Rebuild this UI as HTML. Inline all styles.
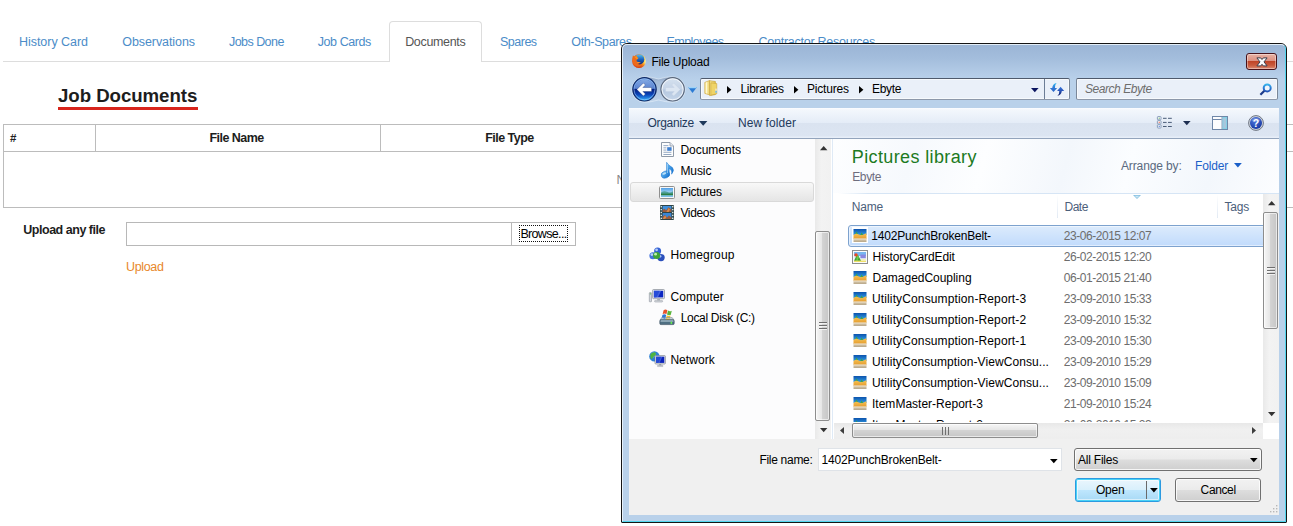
<!DOCTYPE html>
<html><head><meta charset="utf-8"><title>File Upload</title>
<style>
*{box-sizing:border-box;margin:0;padding:0}
html,body{width:1293px;height:526px;overflow:hidden;background:#fff}
body{font-family:"Liberation Sans",sans-serif;font-size:12px;color:#000;position:relative}
.a{position:absolute;white-space:nowrap}
svg{display:block;overflow:visible}
.b{font-weight:bold}
.i{font-style:italic}
</style></head><body>
<svg width="0" height="0" style="position:absolute">
<defs>
<linearGradient id="gBack" x1="0" y1="0" x2="0" y2="1"><stop offset="0" stop-color="#6d9ce0"></stop><stop offset=".46" stop-color="#2f62c4"></stop><stop offset=".5" stop-color="#051f80"></stop><stop offset=".72" stop-color="#0a44b8"></stop><stop offset="1" stop-color="#34b4ff"></stop></linearGradient>
<linearGradient id="gPill" x1="0" y1="0" x2="0" y2="1"><stop offset="0" stop-color="#7f93b2" stop-opacity=".75"></stop><stop offset=".18" stop-color="#97acc9" stop-opacity=".6"></stop><stop offset=".6" stop-color="#a9bfdb" stop-opacity=".55"></stop><stop offset="1" stop-color="#c3d5ea" stop-opacity=".7"></stop></linearGradient>
<linearGradient id="gFolderL" x1="0" y1="0" x2="1" y2="0"><stop offset="0" stop-color="#f3dc78"></stop><stop offset=".35" stop-color="#fbf0b4"></stop><stop offset="1" stop-color="#ecd060"></stop></linearGradient>
<linearGradient id="gFwd" x1="0" y1="0" x2="0" y2="1"><stop offset="0" stop-color="#d6e2f0"></stop><stop offset=".5" stop-color="#c4d3e6"></stop><stop offset=".52" stop-color="#b4c7df"></stop><stop offset="1" stop-color="#c6d6ea"></stop></linearGradient>
<linearGradient id="gThumbV" x1="0" y1="0" x2="1" y2="0"><stop offset="0" stop-color="#f4f4f4"></stop><stop offset=".45" stop-color="#e4e4e4"></stop><stop offset=".5" stop-color="#d2d2d2"></stop><stop offset="1" stop-color="#c4c4c4"></stop></linearGradient>
<linearGradient id="gThumbH" x1="0" y1="0" x2="0" y2="1"><stop offset="0" stop-color="#f4f4f4"></stop><stop offset=".45" stop-color="#e4e4e4"></stop><stop offset=".5" stop-color="#d2d2d2"></stop><stop offset="1" stop-color="#c4c4c4"></stop></linearGradient>
<linearGradient id="gSky" x1="0" y1="0" x2="0" y2="1"><stop offset="0" stop-color="#0c52ac"></stop><stop offset="1" stop-color="#2f9ce6"></stop></linearGradient>
<linearGradient id="gSand" x1="0" y1="0" x2="0" y2="1"><stop offset="0" stop-color="#f5c052"></stop><stop offset="1" stop-color="#e59c2e"></stop></linearGradient>
<linearGradient id="gBeige" x1="0" y1="0" x2="0" y2="1"><stop offset="0" stop-color="#e0d2b6"></stop><stop offset="1" stop-color="#b7a688"></stop></linearGradient>
<linearGradient id="gFolder" x1="0" y1="0" x2="1" y2="0"><stop offset="0" stop-color="#f8ea9c"></stop><stop offset="1" stop-color="#e6c44e"></stop></linearGradient>
<linearGradient id="gRf1" x1="0" y1="0" x2="0" y2="1"><stop offset="0" stop-color="#2cbcf0"></stop><stop offset=".5" stop-color="#2f7ad8"></stop><stop offset="1" stop-color="#2c62c4"></stop></linearGradient>
<linearGradient id="gRf2" x1="0" y1="0" x2="0" y2="1"><stop offset="0" stop-color="#3a78dc"></stop><stop offset=".5" stop-color="#274fb4"></stop><stop offset="1" stop-color="#08145c"></stop></linearGradient>
<linearGradient id="gMag" x1="0" y1="0" x2="0" y2="1"><stop offset="0" stop-color="#35b2ec"></stop><stop offset=".5" stop-color="#2a7ad4"></stop><stop offset="1" stop-color="#2456b8"></stop></linearGradient>
<radialGradient id="gHelp" cx=".4" cy=".3" r=".8"><stop offset="0" stop-color="#4f78e0"></stop><stop offset="1" stop-color="#10309a"></stop></radialGradient>
<linearGradient id="gFoxH" x1="0" y1="0" x2="1" y2="0"><stop offset="0" stop-color="#e5551a"></stop><stop offset=".62" stop-color="#f0781a"></stop><stop offset=".82" stop-color="#ffc52c"></stop><stop offset="1" stop-color="#fff0a0"></stop></linearGradient>
<linearGradient id="gFoxV" x1="0" y1="0" x2="0" y2="1"><stop offset="0" stop-color="#e0481a" stop-opacity="0"></stop><stop offset=".6" stop-color="#e0481a" stop-opacity="0"></stop><stop offset="1" stop-color="#cf3a16" stop-opacity=".95"></stop></linearGradient>
<linearGradient id="gGlobe" x1="0" y1="0" x2="0" y2="1"><stop offset="0" stop-color="#56c2f2"></stop><stop offset=".5" stop-color="#1c62bc"></stop><stop offset="1" stop-color="#0c2a78"></stop></linearGradient>
<radialGradient id="gFox" cx=".5" cy=".4" r=".7"><stop offset="0" stop-color="#ffb52e"></stop><stop offset=".6" stop-color="#ee6a12"></stop><stop offset="1" stop-color="#c8400c"></stop></radialGradient>
<linearGradient id="gNote" x1="0" y1="0" x2="1" y2="1"><stop offset="0" stop-color="#66bcf6"></stop><stop offset="1" stop-color="#0f6ccc"></stop></linearGradient>
<linearGradient id="gPicSky" x1="0" y1="0" x2="0" y2="1"><stop offset="0" stop-color="#4f9fe6"></stop><stop offset=".6" stop-color="#b4dcf6"></stop><stop offset="1" stop-color="#b4dcf6"></stop></linearGradient>
</defs>
</svg>

<div class="a" style="left:3px;top:61px;width:1290px;height:1px;background:#ddd"></div>
<div class="a" style="left:389px;top:21px;width:93px;height:41px;border:1px solid #ddd;border-bottom:0;border-radius:4px 4px 0 0;background:#fff"></div>
<div class="a" style="left: 19px; top: 35px; font-size: 12.5px; line-height: 14px; color: rgb(75, 140, 200); letter-spacing: -0.04px;">History Card</div>
<div class="a" style="left: 122.3px; top: 35px; font-size: 12.5px; line-height: 14px; color: rgb(75, 140, 200); letter-spacing: -0.08px;">Observations</div>
<div class="a" style="left: 229px; top: 35px; font-size: 12.5px; line-height: 14px; color: rgb(75, 140, 200); letter-spacing: -0.55px;">Jobs Done</div>
<div class="a" style="left: 317.8px; top: 35px; font-size: 12.5px; line-height: 14px; color: rgb(75, 140, 200); letter-spacing: -0.44px;">Job Cards</div>
<div class="a" style="left: 405.2px; top: 35px; font-size: 12.5px; line-height: 14px; color: rgb(85, 85, 85); letter-spacing: -0.34px;">Documents</div>
<div class="a" style="left: 500px; top: 35px; font-size: 12.5px; line-height: 14px; color: rgb(75, 140, 200); letter-spacing: -0.5px;">Spares</div>
<div class="a" style="left: 571.3px; top: 35px; font-size: 12.5px; line-height: 14px; color: rgb(75, 140, 200); letter-spacing: -0.37px;">Oth-Spares</div>
<div class="a" style="left: 666.5px; top: 35px; font-size: 12.5px; line-height: 14px; color: rgb(75, 140, 200); letter-spacing: -0.53px;">Employees</div>
<div class="a" style="left: 758.5px; top: 35px; font-size: 12.5px; line-height: 14px; color: rgb(75, 140, 200); letter-spacing: -0.25px;">Contractor Resources</div>
<div class="a b" style="left: 58px; top: 85px; font-size: 18.7px; line-height: 21px; color: rgb(29, 29, 29); letter-spacing: -0.07px;">Job Documents</div>
<div class="a" style="left:58px;top:107px;width:140px;height:3px;background:#d8251c"></div>
<div class="a" style="left:3px;top:124px;width:1300px;height:84px;border:1px solid #bcbcbc"></div>
<div class="a" style="left:4px;top:151px;width:1300px;height:1px;background:#bcbcbc"></div>
<div class="a" style="left:95px;top:125px;width:1px;height:26px;background:#bcbcbc"></div>
<div class="a" style="left:380px;top:125px;width:1px;height:26px;background:#bcbcbc"></div>
<div class="a b" style="left:10px;top:132px;font-size:11.5px;line-height:12px;color:#222;">#</div>
<div class="a b" style="left: 209.4px; top: 131px; font-size: 12.5px; line-height: 14px; color: rgb(29, 29, 29); letter-spacing: -0.52px;">File Name</div>
<div class="a b" style="left: 485.2px; top: 131px; font-size: 12.5px; line-height: 14px; color: rgb(29, 29, 29); letter-spacing: -0.53px;">File Type</div>
<div class="a" style="left:616.5px;top:173px;font-size:12.5px;line-height:14px;color:#8a8a8a;">No</div>
<div class="a b" style="left: 23.3px; top: 223px; font-size: 12.5px; line-height: 14px; color: rgb(29, 29, 29); letter-spacing: -0.48px;">Upload any file</div>
<div class="a" style="left:126px;top:222px;width:450px;height:24px;border:1px solid #b8b8b8;background:#fff"></div>
<div class="a" style="left:511px;top:223px;width:1px;height:22px;background:#b8b8b8"></div>
<div class="a" style="left:519px;top:225px;width:49px;height:17px;border:1px dotted #111"></div>
<div class="a" style="left: 520.4px; top: 227px; font-size: 12.5px; line-height: 14px; color: rgb(0, 0, 0); letter-spacing: -0.66px;">Browse...</div>
<div class="a" style="left: 126px; top: 260px; font-size: 12.5px; line-height: 14px; color: rgb(232, 135, 42); letter-spacing: -0.35px;">Upload</div>
<div class="a" style="left:621px;top:43px;width:666px;height:480px;border:1px solid #151515;border-radius:6px 6px 1px 1px;background:linear-gradient(#9bb5d5 0px,#a3bddc 14px,#b4cce7 30px,#b9d1ea 36px,#b9d1ea 100%)"></div>
<div class="a" style="left:622px;top:44px;width:664px;height:478px;border:1px solid rgba(240,248,254,.85);border-right-color:#52d6ee;border-bottom-color:#52d6ee;border-radius:5px 5px 0 0"></div>
<div class="a" style="left: 651.4px; top: 55px; font-size: 12px; line-height: 14px; color: rgb(0, 0, 0); letter-spacing: -0.25px;">File Upload</div>
<div class="a" style="left:1246px;top:53px;width:31px;height:17px;border:1px solid #47121a;border-radius:3px;background:linear-gradient(#e8b2a5 0,#dc9080 47%,#bf4528 50%,#c95a3c 75%,#da8a72 100%);box-shadow:inset 0 0 0 1px rgba(255,255,255,.4)"></div>
<div class="a" style="left:700px;top:78px;width:370px;height:22px;border:1px solid #7a8799;border-top-color:#4f5a6c;border-bottom-color:#8d98aa;border-radius:2px;background:#eaf0f9;box-shadow:inset 0 0 0 1px #f7fafd"></div>
<div class="a" style="left:1044px;top:79px;width:1px;height:20px;background:#6c7d96"></div>
<div class="a" style="left:1076px;top:78px;width:202px;height:22px;border:1px solid #7a8799;border-top-color:#4f5a6c;border-bottom-color:#8d98aa;border-radius:2px;background:#eaf0f9;box-shadow:inset 0 0 0 1px #f7fafd"></div>
<div class="a" style="left: 740.5px; top: 82px; font-size: 12px; line-height: 14px; color: rgb(0, 0, 0); letter-spacing: -0.3px;">Libraries</div>
<div class="a" style="left: 807px; top: 82px; font-size: 12px; line-height: 14px; color: rgb(0, 0, 0); letter-spacing: -0.19px;">Pictures</div>
<div class="a" style="left: 872px; top: 82px; font-size: 12px; line-height: 14px; color: rgb(0, 0, 0); letter-spacing: -0.34px;">Ebyte</div>
<div class="a i" style="left: 1085px; top: 82px; font-size: 12px; line-height: 14px; color: rgb(109, 109, 109); letter-spacing: -0.45px;">Search Ebyte</div>
<div class="a" style="left:629px;top:108px;width:650px;height:31px;background:linear-gradient(#fcfdff 0,#f3f7fc 2px,#e4ecf7 15px,#dae3f0 15.5px,#dce5f2 28px,#e7eef8 29px,#e7eef8 30px);border-bottom:1px solid #93a4bc"></div>
<div class="a" style="left: 647.4px; top: 116px; font-size: 12px; line-height: 14px; color: rgb(30, 57, 91); letter-spacing: -0.26px;">Organize</div>
<div class="a" style="left: 738px; top: 116px; font-size: 12px; line-height: 14px; color: rgb(30, 57, 91); letter-spacing: 0.06px;">New folder</div>
<div class="a" style="left:629px;top:139px;width:204px;height:300px;background:#fcfcfd"></div>
<div class="a" style="left:833px;top:139px;width:446px;height:300px;background:#fff"></div>
<div class="a" style="left:833px;top:139px;width:446px;height:54px;background:linear-gradient(105deg,#fdfeff 0,#f6f9fd 18%,#fdfeff 34%,#f3f7fc 52%,#fbfdff 66%,#f3f7fc 84%,#fcfdff 100%)"></div>
<div class="a" style="left:629px;top:439px;width:650px;height:76px;background:#f0f0f0"></div>
<div class="a" style="left:630px;top:182px;width:184px;height:20px;border:1px solid #d9d9d9;border-radius:3px;background:linear-gradient(#f8f8f8,#e5e5e5)"></div>
<div class="a" style="left: 680.4px; top: 143px; font-size: 12px; line-height: 14px; color: rgb(0, 0, 0); letter-spacing: -0.01px;">Documents</div>
<div class="a" style="left: 680.4px; top: 164px; font-size: 12px; line-height: 14px; color: rgb(0, 0, 0); letter-spacing: -0.07px;">Music</div>
<div class="a" style="left: 680.4px; top: 185px; font-size: 12px; line-height: 14px; color: rgb(0, 0, 0); letter-spacing: -0.26px;">Pictures</div>
<div class="a" style="left: 680.4px; top: 206px; font-size: 12px; line-height: 14px; color: rgb(0, 0, 0); letter-spacing: -0.33px;">Videos</div>
<div class="a" style="left: 670.4px; top: 248px; font-size: 12px; line-height: 14px; color: rgb(0, 0, 0); letter-spacing: 0.17px;">Homegroup</div>
<div class="a" style="left: 670.4px; top: 290px; font-size: 12px; line-height: 14px; color: rgb(0, 0, 0); letter-spacing: 0.11px;">Computer</div>
<div class="a" style="left: 680.7px; top: 311px; font-size: 12px; line-height: 14px; color: rgb(0, 0, 0); letter-spacing: -0.31px;">Local Disk (C:)</div>
<div class="a" style="left: 670.4px; top: 353px; font-size: 12px; line-height: 14px; color: rgb(0, 0, 0); letter-spacing: 0.05px;">Network</div>
<div class="a" style="left: 851.8px; top: 147px; font-size: 18px; line-height: 20px; color: rgb(28, 122, 34); letter-spacing: 0.37px;">Pictures library</div>
<div class="a" style="left: 852.2px; top: 170px; font-size: 12px; line-height: 14px; color: rgb(110, 110, 126); letter-spacing: -0.34px;">Ebyte</div>
<div class="a" style="left: 1121px; top: 159px; font-size: 12px; line-height: 14px; color: rgb(90, 106, 128); letter-spacing: -0.13px;">Arrange by:</div>
<div class="a" style="left: 1195px; top: 159px; font-size: 12px; line-height: 14px; color: rgb(26, 95, 200); letter-spacing: -0.17px;">Folder</div>
<div class="a" style="left:838px;top:193px;width:441px;height:1px;background:linear-gradient(90deg,#fff,#d6e5f5 30px)"></div>
<div class="a" style="left: 851.8px; top: 200px; font-size: 12px; line-height: 14px; color: rgb(76, 96, 122); letter-spacing: -0.2px;">Name</div>
<div class="a" style="left: 1064.5px; top: 200px; font-size: 12px; line-height: 14px; color: rgb(76, 96, 122); letter-spacing: -0.51px;">Date</div>
<div class="a" style="left: 1224.6px; top: 200px; font-size: 12px; line-height: 14px; color: rgb(76, 96, 122); letter-spacing: -0.24px;">Tags</div>
<div class="a" style="left:1057px;top:194px;width:1px;height:24px;background:linear-gradient(#fff,#e2eaf4)"></div>
<div class="a" style="left:1217px;top:194px;width:1px;height:24px;background:linear-gradient(#fff,#e2eaf4)"></div>
<div class="a" style="left:848px;top:225px;width:420px;height:22px;border:1px solid #7da2ce;border-radius:3px;background:linear-gradient(#dcebfc,#c1dbfc);box-shadow:inset 0 0 0 1px rgba(255,255,255,.5)"></div>
<div class="a" style="left:833px;top:222px;width:430px;height:200px;overflow:hidden"><div class="a" style="left:-833px;top:-222px">
<div class="a" style="left: 871.3px; top: 229px; font-size: 12px; line-height: 14px; color: rgb(0, 0, 0); letter-spacing: -0.19px;">1402PunchBrokenBelt-</div>
<div class="a" style="left: 1063.8px; top: 229px; font-size: 12px; line-height: 14px; color: rgb(109, 109, 109); letter-spacing: -0.46px;">23-06-2015 12:07</div>
<div class="a" style="left: 872.6px; top: 250px; font-size: 12px; line-height: 14px; color: rgb(0, 0, 0); letter-spacing: -0.13px;">HistoryCardEdit</div>
<div class="a" style="left: 1063.8px; top: 250px; font-size: 12px; line-height: 14px; color: rgb(109, 109, 109); letter-spacing: -0.46px;">26-02-2015 12:20</div>
<div class="a" style="left: 872.6px; top: 271px; font-size: 12px; line-height: 14px; color: rgb(0, 0, 0); letter-spacing: -0.03px;">DamagedCoupling</div>
<div class="a" style="left: 1063.8px; top: 271px; font-size: 12px; line-height: 14px; color: rgb(109, 109, 109); letter-spacing: -0.46px;">06-01-2015 21:40</div>
<div class="a" style="left: 872px; top: 292px; font-size: 12px; line-height: 14px; color: rgb(0, 0, 0); letter-spacing: 0.13px;">UtilityConsumption-Report-3</div>
<div class="a" style="left: 1063.8px; top: 292px; font-size: 12px; line-height: 14px; color: rgb(109, 109, 109); letter-spacing: -0.46px;">23-09-2010 15:33</div>
<div class="a" style="left: 872px; top: 313px; font-size: 12px; line-height: 14px; color: rgb(0, 0, 0); letter-spacing: 0.13px;">UtilityConsumption-Report-2</div>
<div class="a" style="left: 1063.8px; top: 313px; font-size: 12px; line-height: 14px; color: rgb(109, 109, 109); letter-spacing: -0.46px;">23-09-2010 15:32</div>
<div class="a" style="left: 872px; top: 334px; font-size: 12px; line-height: 14px; color: rgb(0, 0, 0); letter-spacing: 0.13px;">UtilityConsumption-Report-1</div>
<div class="a" style="left: 1063.8px; top: 334px; font-size: 12px; line-height: 14px; color: rgb(109, 109, 109); letter-spacing: -0.46px;">23-09-2010 15:30</div>
<div class="a" style="left: 872px; top: 355px; font-size: 12px; line-height: 14px; color: rgb(0, 0, 0); letter-spacing: 0.08px;">UtilityConsumption-ViewConsu...</div>
<div class="a" style="left: 1063.8px; top: 355px; font-size: 12px; line-height: 14px; color: rgb(109, 109, 109); letter-spacing: -0.46px;">23-09-2010 15:29</div>
<div class="a" style="left: 872px; top: 376px; font-size: 12px; line-height: 14px; color: rgb(0, 0, 0); letter-spacing: 0.08px;">UtilityConsumption-ViewConsu...</div>
<div class="a" style="left: 1063.8px; top: 376px; font-size: 12px; line-height: 14px; color: rgb(109, 109, 109); letter-spacing: -0.46px;">23-09-2010 15:09</div>
<div class="a" style="left: 872px; top: 397px; font-size: 12px; line-height: 14px; color: rgb(0, 0, 0); letter-spacing: 0.01px;">ItemMaster-Report-3</div>
<div class="a" style="left: 1063.8px; top: 397px; font-size: 12px; line-height: 14px; color: rgb(109, 109, 109); letter-spacing: -0.46px;">21-09-2010 15:24</div>
<div class="a" style="left: 872px; top: 418px; font-size: 12px; line-height: 14px; color: rgb(0, 0, 0); letter-spacing: 0.01px;">ItemMaster-Report-2</div>
<div class="a" style="left: 1063.8px; top: 418px; font-size: 12px; line-height: 14px; color: rgb(109, 109, 109); letter-spacing: -0.46px;">21-09-2010 15:23</div>
</div></div>
<div class="a" style="left: 759.4px; top: 453px; font-size: 12px; line-height: 14px; color: rgb(0, 0, 0); letter-spacing: -0.29px;">File name:</div>
<div class="a" style="left:818px;top:448px;width:244px;height:23px;border:1px solid #dfe3e8;background:#fff"></div>
<div class="a" style="left: 821.6px; top: 453px; font-size: 12px; line-height: 14px; color: rgb(0, 0, 0); letter-spacing: -0.17px;">1402PunchBrokenBelt-</div>
<div class="a" style="left:1074px;top:448px;width:188px;height:23px;border:1px solid #707070;border-radius:3px;background:linear-gradient(#f2f2f2 0,#ebebeb 48%,#dddddd 52%,#cfcfcf 100%);box-shadow:inset 0 0 0 1px rgba(255,255,255,.8)"></div>
<div class="a" style="left: 1078px; top: 453px; font-size: 12px; line-height: 14px; color: rgb(0, 0, 0); letter-spacing: -0.22px;">All Files</div>
<div class="a" style="left:1075px;top:478px;width:86px;height:24px;border:1px solid #2c9ae0;border-radius:3px;background:linear-gradient(#eaf6fd 0,#d9f0fc 48%,#bee6fd 52%,#a7d9f5 100%);box-shadow:inset 0 0 0 1px #48d2f6, inset 0 0 0 2px rgba(255,255,255,.55)"></div>
<div class="a" style="left:1146px;top:481px;width:1px;height:18px;background:#6a6a6a"></div>
<div class="a" style="left: 1096px; top: 483px; font-size: 12px; line-height: 14px; color: rgb(0, 0, 0); letter-spacing: -0.26px;">Open</div>
<div class="a" style="left:1175px;top:478px;width:86px;height:24px;border:1px solid #707070;border-radius:3px;background:linear-gradient(#f2f2f2 0,#ebebeb 48%,#dddddd 52%,#cfcfcf 100%);box-shadow:inset 0 0 0 1px rgba(255,255,255,.8)"></div>
<div class="a" style="left: 1200.6px; top: 483px; font-size: 12px; line-height: 14px; color: rgb(0, 0, 0); letter-spacing: -0.38px;">Cancel</div>
<svg class="a" style="left:632px;top:54px" width="14" height="14" viewBox="0 0 14 14"><circle cx="7" cy="7.1" r="6.9" fill="url(#gFoxH)"></circle><circle cx="7" cy="7.1" r="6.9" fill="url(#gFoxV)"></circle><circle cx="7.3" cy="5.4" r="5" fill="url(#gGlobe)"></circle><path d="M.9 1.5 L2.9 2.7 L4.7 1.7 L4.9 3.3 L6.4 4.1 L5 5.5 Q4.2 6.6 4.8 7.6 Q6.4 8.6 8.8 7.9 Q8 9.6 5.8 9.9 Q8 11.6 10.6 10.2 Q8.4 13.2 4.6 12.2 Q.6 10.4 .3 6.4 Q.2 3.6 .9 1.5Z" fill="#ee6a1a"></path><path d="M.9 1.5 L2.9 2.7 L4.7 1.7 L4.9 3.3 L6.4 4.1 L5 5.5 Q3.4 4 .9 1.5Z" fill="#f7941e"></path><path d="M4.6 7.4 Q6.4 8.6 8.8 7.9 Q7.8 9 6 8.9Z" fill="#f9a63a"></path></svg>
<svg class="a" style="left:1255.5px;top:56.5px" width="12" height="10" viewBox="0 0 12 10"><path d="M.9 .9 H4.7 L6 2.5 L7.3 .9 H11.1 L8 4.9 L11.1 8.9 H7.3 L6 7.3 L4.7 8.9 H.9 L4 4.9Z" fill="#fbfbfb" stroke="#3b3d4c" stroke-width="1" stroke-linejoin="round"></path></svg>
<svg class="a" style="left:629px;top:76px" width="60" height="27" viewBox="0 0 60 27"><path d="M15.5 .8 A12.7 12.7 0 0 0 15.5 26.2 Q22 26.2 29.5 24 Q37 26.2 43.6 26.2 A12.7 12.7 0 0 0 43.6 .8 Q37 .8 29.5 3 Q22 .8 15.5 .8Z" fill="url(#gPill)" stroke="rgba(225,236,248,.7)" stroke-width="1"></path></svg>
<svg class="a" style="left:632px;top:77px" width="25" height="25" viewBox="0 0 25 25"><circle cx="12.5" cy="12.3" r="11.7" fill="url(#gBack)" stroke="#0f2a66" stroke-width="1.1"></circle><circle cx="12.5" cy="12.3" r="10.5" fill="none" stroke="rgba(190,222,255,.5)" stroke-width="1"></circle><path d="M2.6 11.4 A10 10 0 0 1 22.4 11.4 Q12.5 14.2 2.6 11.4Z" fill="rgba(255,255,255,.22)"></path><path d="M4.9 12.5 L11.4 6 L13.4 8 L10.9 10.5 H19.6 V14.5 H10.9 L13.4 17 L11.4 19Z" fill="#fff" stroke="rgba(16,44,110,.55)" stroke-width=".6" stroke-linejoin="round"></path></svg>
<svg class="a" style="left:660px;top:77px" width="25" height="25" viewBox="0 0 25 25"><circle cx="12.6" cy="12.3" r="11.7" fill="url(#gFwd)" stroke="#596578" stroke-width="1.1"></circle><circle cx="12.6" cy="12.3" r="10.5" fill="none" stroke="rgba(255,255,255,.75)" stroke-width="1"></circle><path d="M20.2 12.5 L13.7 6 L11.7 8 L14.2 10.5 H5.6 V14.5 H14.2 L11.7 17 L13.7 19Z" fill="#dce6f2" stroke="#c2d0e2" stroke-width=".4"></path></svg>
<svg class="a" style="left:688px;top:87px" width="9" height="6" viewBox="0 0 9 6"><path d="M0 0H9L4.5 6Z" fill="#2b7bd4"></path><path d="M0 0H9L8 1.3H1Z" fill="#9fd4f8"></path></svg>
<svg class="a" style="left:704px;top:80px" width="14" height="16" viewBox="0 0 14 16"><path d="M.8 2.4 L5.6 .5 V14.9 L.8 13.4Z" fill="url(#gFolderL)" stroke="#c9a030" stroke-width=".6"></path><path d="M5.6 .7 L11.4 1.5 V14.6 L5.6 15.6Z" fill="url(#gFolder)" stroke="#c39a2c" stroke-width=".6"></path><path d="M6.8 2.8 L12.8 3.6 V13.8 L6.8 15.2Z" fill="#efd468" stroke="#c39a2c" stroke-width=".5"></path><path d="M1.8 2.6 L2.8 2.2 V13.4 L1.8 13.1Z" fill="#fffbe0" opacity=".9"></path><rect x="11.5" y="8.6" width="1.1" height="4.2" fill="#f8f4e8"></rect><rect x="11.5" y="10.8" width="1.1" height="2" fill="#3fa8e8"></rect></svg>
<svg class="a" style="left:726.6px;top:86px" width="4.4" height="7.6" viewBox="0 0 4.4 7.6"><path d="M0 0V7.6L4.4 3.8Z" fill="#000"></path></svg>
<svg class="a" style="left:793.6px;top:86px" width="4.4" height="7.6" viewBox="0 0 4.4 7.6"><path d="M0 0V7.6L4.4 3.8Z" fill="#000"></path></svg>
<svg class="a" style="left:858.7px;top:86px" width="4.4" height="7.6" viewBox="0 0 4.4 7.6"><path d="M0 0V7.6L4.4 3.8Z" fill="#000"></path></svg>
<svg class="a" style="left:1030.8px;top:88px" width="7.6" height="4.3" viewBox="0 0 7.6 4.3"><path d="M0 0H7.6L3.8 4.3Z" fill="#0b1560"></path></svg>
<svg class="a" style="left:1049px;top:82px" width="16" height="15" viewBox="0 0 16 15"><path d="M.9 5.9 H8.1 L4.5 10.1Z M7.6 .9 Q3.8 1.4 3.2 6 H5.9 Q5.6 2.8 7.6 .9Z" fill="url(#gRf1)"></path><path d="M8.1 8.9 H15.2 L11.6 4.8Z M10.3 8.8 Q10.6 12 8.4 13.8 Q12.2 13.4 12.9 8.8Z" fill="url(#gRf2)"></path></svg>
<svg class="a" style="left:1259px;top:83px" width="13" height="13" viewBox="0 0 13 13"><path d="M5.7 7.5 L1.4 11.8" stroke="#1c3a8a" stroke-width="2.2"></path><circle cx="8.2" cy="4.9" r="3.5" fill="#f0f6fc" stroke="url(#gMag)" stroke-width="2"></circle></svg>
<svg class="a" style="left:699px;top:120.8px" width="8.4" height="4.8" viewBox="0 0 8.4 4.8"><path d="M0 0H8.4L4.2 4.8Z" fill="#1e395b"></path></svg>
<svg class="a" style="left:1157px;top:116px" width="16" height="13" viewBox="0 0 16 13"><g fill="#fff" stroke="#7b92b2" stroke-width=".9"><rect x=".4" y=".6" width="3.6" height="3.2" rx=".6"></rect><rect x=".4" y="4.7" width="3.6" height="3.2" rx=".6"></rect><rect x=".4" y="8.8" width="3.6" height="3.2" rx=".6"></rect></g><rect x="1.7" y="1.7" width="1" height="1" fill="#3d9a3d"></rect><rect x="1.7" y="5.8" width="1" height="1" fill="#e0321e"></rect><rect x="1.7" y="9.9" width="1" height="1" fill="#2a62d8"></rect><g fill="#4a5d78"><rect x="6" y="1.8" width="3.6" height="1"></rect><rect x="11" y="1.8" width="3.8" height="1"></rect><rect x="6" y="5.9" width="3.6" height="1"></rect><rect x="11" y="5.9" width="3.8" height="1"></rect><rect x="6" y="10" width="3.6" height="1"></rect><rect x="11" y="10" width="3.8" height="1"></rect></g></svg>
<svg class="a" style="left:1182.8px;top:120.8px" width="7.6" height="4.3" viewBox="0 0 7.6 4.3"><path d="M0 0H7.6L3.8 4.3Z" fill="#1e2f52"></path></svg>
<svg class="a" style="left:1212px;top:116px" width="16" height="14" viewBox="0 0 16 14"><rect x=".5" y=".5" width="15" height="13" fill="#fdfdfe" stroke="#6f87a8"></rect><rect x="1" y="3" width="8.6" height="1" fill="#6f87a8"></rect><rect x="9.6" y="1" width="1" height="12" fill="#6f87a8"></rect><rect x="10.6" y="1" width="4.4" height="12" fill="#7fd3e8"></rect><rect x="11.4" y="1.8" width="2.8" height="10.4" fill="#a9c6dc"></rect></svg>
<svg class="a" style="left:1248px;top:115px" width="16" height="16" viewBox="0 0 16 16"><circle cx="8" cy="8" r="7.4" fill="#cfd6e0" stroke="#6f7683" stroke-width="1"></circle><circle cx="8" cy="8" r="6" fill="url(#gHelp)"></circle><path d="M3.4 5.8 A5 5 0 0 1 12.6 5.8 Q8 8 3.4 5.8Z" fill="rgba(255,255,255,.22)"></path><text x="8" y="11.8" font-family="Liberation Sans" font-weight="bold" font-size="10.5" fill="#fff" text-anchor="middle">?</text></svg>
<svg class="a" style="left:1234px;top:163.2px" width="7.8" height="4.5" viewBox="0 0 7.8 4.5"><path d="M0 0H7.8L3.9 4.5Z" fill="#1a5fc8"></path></svg>
<svg class="a" style="left:1133px;top:194.5px" width="8" height="4" viewBox="0 0 8 4"><path d="M0 0H8L4 4Z" fill="#86bfe0"></path><path d="M1.6 .7H6.4L4 3Z" fill="#c8e6f6"></path></svg>
<svg class="a" style="left:1049.6px;top:459px" width="7.6" height="4.3" viewBox="0 0 7.6 4.3"><path d="M0 0H7.6L3.8 4.3Z" fill="#000"></path></svg>
<svg class="a" style="left:1249.7px;top:458px" width="7.6" height="4.3" viewBox="0 0 7.6 4.3"><path d="M0 0H7.6L3.8 4.3Z" fill="#000"></path></svg>
<svg class="a" style="left:1149.8px;top:488.4px" width="7.8" height="4.4" viewBox="0 0 7.8 4.4"><path d="M0 0H7.8L3.9 4.4Z" fill="#000"></path></svg>
<svg class="a" style="left:1269px;top:504px" width="10" height="10" viewBox="0 0 10 10"><rect x="7" y="1" width="1.4" height="1.4" fill="#b8b8b8"></rect><rect x="4" y="4" width="1.4" height="1.4" fill="#b8b8b8"></rect><rect x="7" y="4" width="1.4" height="1.4" fill="#b8b8b8"></rect><rect x="1" y="7" width="1.4" height="1.4" fill="#b8b8b8"></rect><rect x="4" y="7" width="1.4" height="1.4" fill="#b8b8b8"></rect><rect x="7" y="7" width="1.4" height="1.4" fill="#b8b8b8"></rect></svg>
<div class="a" style="left:815px;top:139px;width:16px;height:300px;background:linear-gradient(90deg,#e9e9e9,#f3f3f3 40%,#f1f1f1)"></div>
<div class="a" style="left:815px;top:231px;width:15px;height:190px;border:1px solid #8d8d8d;border-radius:2px;background:linear-gradient(90deg,#f6f6f6 0,#e6e6e6 45%,#d3d3d3 50%,#c6c6c6 100%);box-shadow:inset 0 0 0 1px rgba(255,255,255,.6)"></div>
<svg class="a" style="left:818.5px;top:322.1px" width="8" height="7" viewBox="0 0 8 7"><g fill="#6f6f6f"><rect y="0" width="8" height="1"></rect><rect y="3" width="8" height="1"></rect><rect y="6" width="8" height="1"></rect></g><g fill="#fff" opacity=".7"><rect y="1" width="8" height="1"></rect><rect y="4" width="8" height="1"></rect><rect y="7" width="8" height="1"></rect></g></svg>
<svg class="a" style="left:819.8px;top:145.8px" width="7.4" height="4.3" viewBox="0 0 7.4 4.3"><path d="M0 4.3H7.4L3.7 0Z" fill="#333"></path></svg>
<svg class="a" style="left:819.8px;top:428.40000000000003px" width="7.4" height="4.3" viewBox="0 0 7.4 4.3"><path d="M0 0H7.4L3.7 4.3Z" fill="#333"></path></svg>
<div class="a" style="left:831px;top:139px;width:2px;height:300px;background:#fff"></div>
<div class="a" style="left:832px;top:139px;width:1px;height:300px;background:#dfeaf6"></div>
<div class="a" style="left:1263px;top:194px;width:16px;height:229px;background:linear-gradient(90deg,#e9e9e9,#f3f3f3 40%,#f1f1f1)"></div>
<div class="a" style="left:1263px;top:212px;width:15px;height:117px;border:1px solid #8d8d8d;border-radius:2px;background:linear-gradient(90deg,#f6f6f6 0,#e6e6e6 45%,#d3d3d3 50%,#c6c6c6 100%);box-shadow:inset 0 0 0 1px rgba(255,255,255,.6)"></div>
<svg class="a" style="left:1266.5px;top:266.5px" width="8" height="7" viewBox="0 0 8 7"><g fill="#6f6f6f"><rect y="0" width="8" height="1"></rect><rect y="3" width="8" height="1"></rect><rect y="6" width="8" height="1"></rect></g><g fill="#fff" opacity=".7"><rect y="1" width="8" height="1"></rect><rect y="4" width="8" height="1"></rect><rect y="7" width="8" height="1"></rect></g></svg>
<svg class="a" style="left:1267.8px;top:200.8px" width="7.4" height="4.3" viewBox="0 0 7.4 4.3"><path d="M0 4.3H7.4L3.7 0Z" fill="#333"></path></svg>
<svg class="a" style="left:1267.8px;top:411.8px" width="7.4" height="4.3" viewBox="0 0 7.4 4.3"><path d="M0 0H7.4L3.7 4.3Z" fill="#333"></path></svg>
<div class="a" style="left:834px;top:423px;width:429px;height:16px;background:linear-gradient(#e8e8e8,#f0f0f0 40%,#eeeeee)"></div>
<div class="a" style="left:852px;top:423px;width:186px;height:15px;border:1px solid #8d8d8d;border-radius:2px;background:linear-gradient(#f6f6f6 0,#e6e6e6 45%,#d3d3d3 50%,#c6c6c6 100%);box-shadow:inset 0 0 0 1px rgba(255,255,255,.6)"></div>
<svg class="a" style="left:941.5px;top:427px" width="7" height="8" viewBox="0 0 7 8"><g fill="#6f6f6f"><rect x="0" width="1" height="8"></rect><rect x="3" width="1" height="8"></rect><rect x="6" width="1" height="8"></rect></g></svg>
<svg class="a" style="left:839.6px;top:427px" width="4" height="7" viewBox="0 0 4 7"><path d="M4 0V7L0 3.5Z" fill="#3d3d3d"></path></svg>
<svg class="a" style="left:1251.6px;top:427px" width="4" height="7" viewBox="0 0 4 7"><path d="M0 0V7L4 3.5Z" fill="#3d3d3d"></path></svg>
<svg class="a" style="left:661px;top:142px" width="13" height="15" viewBox="0 0 13 15"><path d="M.5 .5 H9 L12.5 4 V14.5 H.5Z" fill="#fdfdfd" stroke="#8f9aa8"></path><path d="M9 .5 V4 H12.5" fill="#e4e8ee" stroke="#8f9aa8" stroke-width=".8"></path><g fill="#8aa0bd"><rect x="2.4" y="3.2" width="5" height=".9"></rect><rect x="2.4" y="5.4" width="3" height=".9"></rect><rect x="2.4" y="7.6" width="3" height=".9"></rect><rect x="2.4" y="9.8" width="8" height=".9"></rect><rect x="2.4" y="12" width="8" height=".9"></rect></g><rect x="6.2" y="5.2" width="4.4" height="3.6" fill="#3f7fd0"></rect></svg>
<svg class="a" style="left:661px;top:161.5px" width="13" height="16.5" viewBox="0 0 13 16.5"><path d="M5.6 13 V.3 Q7.2 3.4 11.4 5.5 Q13.9 8.2 10.6 12.2 Q11.7 8.6 8.2 6.4 V13.2Z" fill="url(#gNote)" stroke="#1b74cf" stroke-width=".5"></path><ellipse cx="4.4" cy="12.6" rx="4.3" ry="3.4" fill="url(#gNote)" stroke="#1b74cf" stroke-width=".5" transform="rotate(-20 4.4 12.6)"></ellipse><ellipse cx="3.3" cy="11.5" rx="2" ry="1.1" fill="#cdeafc" opacity=".85" transform="rotate(-20 3.3 11.5)"></ellipse><path d="M6.5 1.8 V11" stroke="#bfe2fa" stroke-width=".8" opacity=".75"></path></svg>
<svg class="a" style="left:659px;top:186px" width="16" height="13" viewBox="0 0 16 13"><rect x=".5" y=".5" width="15" height="12" rx="1" fill="#f7f7f7" stroke="#8f8f8f"></rect><rect x="2" y="2" width="12" height="9" fill="url(#gPicSky)"></rect><path d="M2 6.6 Q5 4.4 8 5.8 T14 5.2 V8.4 H2Z" fill="#4f9f9a"></path><rect x="2" y="7.6" width="12" height="2" fill="#2a7f45"></rect><rect x="2" y="9.4" width="12" height="1.6" fill="#7cc0e8"></rect></svg>
<svg class="a" style="left:660px;top:205px" width="14" height="15" viewBox="0 0 14 15"><rect x="0" y="0" width="14" height="15" rx="1" fill="#2f4446"></rect><rect x="2.6" y="1" width="8.8" height="6" fill="#3f8fdc"></rect><rect x="2.6" y="8" width="8.8" height="6" fill="#3a86d4"></rect><path d="M2.6 7 V5 L4.6 3.8 L6 5.4 L8.6 2.2 L11.4 4.6 V7Z" fill="#9a5a3c"></path><path d="M6.4 7 L8.6 3 L10 4.6 L8.6 7Z" fill="#d88a4a"></path><path d="M2.6 14 V11.6 L5 10 L7 12.4 L9 10.6 L11.4 12.6 V14Z" fill="#9a5a3c"></path><path d="M2.6 14 L5 10.6 L6.4 12.4 L5 14Z" fill="#d88a4a"></path><g fill="#e8f6f0"><rect x=".6" y="1" width="1.3" height="1.4"></rect><rect x="12.1" y="1" width="1.3" height="1.4"></rect><rect x=".6" y="3.9" width="1.3" height="1.4"></rect><rect x="12.1" y="3.9" width="1.3" height="1.4"></rect><rect x=".6" y="6.8" width="1.3" height="1.4"></rect><rect x="12.1" y="6.8" width="1.3" height="1.4"></rect><rect x=".6" y="9.7" width="1.3" height="1.4"></rect><rect x="12.1" y="9.7" width="1.3" height="1.4"></rect><rect x=".6" y="12.6" width="1.3" height="1.4"></rect><rect x="12.1" y="12.6" width="1.3" height="1.4"></rect></g></svg>
<svg class="a" style="left:649px;top:247px" width="16" height="15" viewBox="0 0 16 15"><circle cx="8.6" cy="3.9" r="3.5" fill="#3461d4"></circle><circle cx="7.6" cy="2.8" r="1.4" fill="#b4ccf8"></circle><circle cx="3.9" cy="8.8" r="3.5" fill="#4373de"></circle><circle cx="2.9" cy="7.6" r="1.4" fill="#bcd2fa"></circle><circle cx="12" cy="10.6" r="3.7" fill="#2b50bc"></circle><circle cx="11" cy="9.3" r="1.4" fill="#a6c0f4"></circle><circle cx="7.6" cy="8.4" r="3.5" fill="#3fa436"></circle><circle cx="6.6" cy="7.2" r="1.4" fill="#c2eeb2"></circle></svg>
<svg class="a" style="left:649px;top:289px" width="16" height="14" viewBox="0 0 16 14"><rect x=".3" y="3.6" width="2.2" height="9.2" rx=".5" fill="#d4d8de" stroke="#7a818a" stroke-width=".5"></rect><rect x=".9" y="4.4" width="1" height="1" fill="#3fc43a"></rect><rect x="3.6" y=".5" width="11.9" height="9.2" rx=".9" fill="#e4e7eb" stroke="#858c96" stroke-width=".7"></rect><rect x="4.9" y="1.8" width="9.3" height="6.6" fill="#0b27c2"></rect><path d="M4.9 1.8 H10.5 L7.2 8.4 H4.9Z" fill="#2f5ae0" opacity=".75"></path><path d="M10.5 1.8 H12.2 L8.9 8.4 H7.2Z" fill="#6f96f4" opacity=".55"></path><rect x="8.2" y="9.8" width="2.8" height="1.7" fill="#a9afb8"></rect><rect x="5.6" y="11.4" width="8" height="1.7" rx=".6" fill="#d0d4da" stroke="#858c96" stroke-width=".4"></rect></svg>
<svg class="a" style="left:659px;top:308.5px" width="16" height="16" viewBox="0 0 16 16"><path d="M4.6 1.2 Q6.4 -.2 8.4 1.2 L7.4 5.2 Q5.6 4 3.6 5.2Z" fill="#e9532b"></path><path d="M9 1.5 Q10.8 2.8 12.8 1.7 L11.8 5.7 Q9.8 6.8 8 5.5Z" fill="#5bb53d"></path><path d="M3.4 5.9 Q5.4 4.8 7.2 5.9 L6.2 9.9 Q4.4 8.8 2.4 9.9Z" fill="#3079da"></path><path d="M7.8 6.2 Q9.6 7.5 11.6 6.4 L10.6 10.4 Q8.6 11.5 6.8 10.2Z" fill="#f5c22b"></path><path d="M1 11 L2.8 8.6 H13.2 L15 11Z" fill="#c9d3da" stroke="#6c7a84" stroke-width=".5"></path><path d="M4.2 8.7 Q5.4 8.2 6.4 8.8 L6.2 9.9 Q4.4 8.8 3.4 9.4Z" fill="#3079da"></path><path d="M7.2 9 Q9 10.2 11 9.2 L10.6 10.4 Q8.6 11.5 6.8 10.2Z" fill="#f5c22b"></path><rect x=".8" y="10.8" width="14.4" height="4.8" rx="1.1" fill="#4f6f82" stroke="#33485a" stroke-width=".6"></rect><rect x="1.5" y="11.3" width="13" height="1.5" rx=".5" fill="#9db6c4"></rect><rect x="11.6" y="12.7" width="1.5" height="2.2" fill="#63f24c"></rect></svg>
<svg class="a" style="left:649px;top:351px" width="17" height="16" viewBox="0 0 17 16"><circle cx="5.4" cy="5.4" r="5.2" fill="#2b7fd6"></circle><circle cx="4.4" cy="3.8" r="2.6" fill="#7fc0f2" opacity=".55"></circle><path d="M1.8 2.8 Q3.8 .8 6.4 1.4 Q7.8 3.4 5.6 4.8 Q3.4 6.2 2.8 8.6 Q.4 6 1.8 2.8Z" fill="#4fb43e"></path><path d="M7 5.4 Q9.4 4.8 10.2 6.8 Q8.8 9.8 6.2 10.2Z" fill="#4fb43e"></path><rect x="6" y="4.6" width="10.4" height="8.4" rx=".8" fill="#e2e5ea" stroke="#6d747e" stroke-width=".6"></rect><rect x="7.1" y="5.7" width="8.2" height="6.2" fill="#0b22bc"></rect><path d="M7.1 5.7 H12 L9.2 11.9 H7.1Z" fill="#2c55de" opacity=".75"></path><path d="M12 5.7 H13.4 L10.6 11.9 H9.2Z" fill="#6d92f2" opacity=".5"></path><rect x="10.2" y="13" width="2" height="1.5" fill="#9aa0a8"></rect><rect x="8.4" y="14.3" width="5.6" height="1.3" rx=".4" fill="#bcc1c9" stroke="#858c96" stroke-width=".3"></rect></svg>
<div class="a" style="left:833px;top:222px;width:430px;height:200px;overflow:hidden">
<svg class="a" style="left:19px;top:5px" width="16" height="16" viewBox="0 0 16 16"><rect x="0" y="0" width="16" height="16" fill="#fff"></rect><rect x="1.5" y="2" width="13" height="6" fill="url(#gSky)"></rect><path d="M3 7.6 L4.6 4.4 L6.2 7.6Z M8 8.4 L9.7 5.6 L11.4 8.4Z" fill="#3fa544"></path><path d="M1.5 8 Q4 5.6 7 7.6 Q9.6 9 12 7.2 Q13.4 6.2 14.5 6.6 V12 H1.5Z" fill="url(#gSand)"></path><rect x="1.5" y="11.6" width="13" height="3.4" fill="url(#gBeige)"></rect><rect x="1.5" y="11.6" width="13" height=".8" fill="#efe4cc"></rect></svg>
<svg class="a" style="left:19px;top:27.7px" width="16" height="14" viewBox="0 0 16 14"><rect x=".5" y=".5" width="15" height="13" fill="#fafafa" stroke="#8e8e8e"></rect><rect x="2" y="2" width="12" height="10" fill="#e6f0fa"></rect><rect x="2" y="2" width="12" height="4" fill="#78b6f0"></rect><rect x="8.4" y="4.6" width="5.4" height="3.6" fill="#8a88e0"></rect><path d="M2 11 L4.6 5.2 Q5.4 4.4 6.2 5.4 L9.2 11Z" fill="#3fa030"></path><path d="M4.6 5.2 Q5.4 4.4 6.2 5.4 L7 7 L5.4 11 H4.4Z" fill="#6fc84a"></path><circle cx="4" cy="4.9" r="1.7" fill="#ea4a22"></circle><path d="M2 10.6 H14 V12 H2Z" fill="#f0e06a"></path><path d="M9 9.4 Q11 8.4 14 9.6 V10.8 H9Z" fill="#f6eeb0"></path></svg>
<svg class="a" style="left:19px;top:47px" width="16" height="16" viewBox="0 0 16 16"><rect x="0" y="0" width="16" height="16" fill="#fff"></rect><rect x="1.5" y="2" width="13" height="6" fill="url(#gSky)"></rect><path d="M3 7.6 L4.6 4.4 L6.2 7.6Z M8 8.4 L9.7 5.6 L11.4 8.4Z" fill="#3fa544"></path><path d="M1.5 8 Q4 5.6 7 7.6 Q9.6 9 12 7.2 Q13.4 6.2 14.5 6.6 V12 H1.5Z" fill="url(#gSand)"></path><rect x="1.5" y="11.6" width="13" height="3.4" fill="url(#gBeige)"></rect><rect x="1.5" y="11.6" width="13" height=".8" fill="#efe4cc"></rect></svg>
<svg class="a" style="left:19px;top:68px" width="16" height="16" viewBox="0 0 16 16"><rect x="0" y="0" width="16" height="16" fill="#fff"></rect><rect x="1.5" y="2" width="13" height="6" fill="url(#gSky)"></rect><path d="M3 7.6 L4.6 4.4 L6.2 7.6Z M8 8.4 L9.7 5.6 L11.4 8.4Z" fill="#3fa544"></path><path d="M1.5 8 Q4 5.6 7 7.6 Q9.6 9 12 7.2 Q13.4 6.2 14.5 6.6 V12 H1.5Z" fill="url(#gSand)"></path><rect x="1.5" y="11.6" width="13" height="3.4" fill="url(#gBeige)"></rect><rect x="1.5" y="11.6" width="13" height=".8" fill="#efe4cc"></rect></svg>
<svg class="a" style="left:19px;top:89px" width="16" height="16" viewBox="0 0 16 16"><rect x="0" y="0" width="16" height="16" fill="#fff"></rect><rect x="1.5" y="2" width="13" height="6" fill="url(#gSky)"></rect><path d="M3 7.6 L4.6 4.4 L6.2 7.6Z M8 8.4 L9.7 5.6 L11.4 8.4Z" fill="#3fa544"></path><path d="M1.5 8 Q4 5.6 7 7.6 Q9.6 9 12 7.2 Q13.4 6.2 14.5 6.6 V12 H1.5Z" fill="url(#gSand)"></path><rect x="1.5" y="11.6" width="13" height="3.4" fill="url(#gBeige)"></rect><rect x="1.5" y="11.6" width="13" height=".8" fill="#efe4cc"></rect></svg>
<svg class="a" style="left:19px;top:110px" width="16" height="16" viewBox="0 0 16 16"><rect x="0" y="0" width="16" height="16" fill="#fff"></rect><rect x="1.5" y="2" width="13" height="6" fill="url(#gSky)"></rect><path d="M3 7.6 L4.6 4.4 L6.2 7.6Z M8 8.4 L9.7 5.6 L11.4 8.4Z" fill="#3fa544"></path><path d="M1.5 8 Q4 5.6 7 7.6 Q9.6 9 12 7.2 Q13.4 6.2 14.5 6.6 V12 H1.5Z" fill="url(#gSand)"></path><rect x="1.5" y="11.6" width="13" height="3.4" fill="url(#gBeige)"></rect><rect x="1.5" y="11.6" width="13" height=".8" fill="#efe4cc"></rect></svg>
<svg class="a" style="left:19px;top:131px" width="16" height="16" viewBox="0 0 16 16"><rect x="0" y="0" width="16" height="16" fill="#fff"></rect><rect x="1.5" y="2" width="13" height="6" fill="url(#gSky)"></rect><path d="M3 7.6 L4.6 4.4 L6.2 7.6Z M8 8.4 L9.7 5.6 L11.4 8.4Z" fill="#3fa544"></path><path d="M1.5 8 Q4 5.6 7 7.6 Q9.6 9 12 7.2 Q13.4 6.2 14.5 6.6 V12 H1.5Z" fill="url(#gSand)"></path><rect x="1.5" y="11.6" width="13" height="3.4" fill="url(#gBeige)"></rect><rect x="1.5" y="11.6" width="13" height=".8" fill="#efe4cc"></rect></svg>
<svg class="a" style="left:19px;top:152px" width="16" height="16" viewBox="0 0 16 16"><rect x="0" y="0" width="16" height="16" fill="#fff"></rect><rect x="1.5" y="2" width="13" height="6" fill="url(#gSky)"></rect><path d="M3 7.6 L4.6 4.4 L6.2 7.6Z M8 8.4 L9.7 5.6 L11.4 8.4Z" fill="#3fa544"></path><path d="M1.5 8 Q4 5.6 7 7.6 Q9.6 9 12 7.2 Q13.4 6.2 14.5 6.6 V12 H1.5Z" fill="url(#gSand)"></path><rect x="1.5" y="11.6" width="13" height="3.4" fill="url(#gBeige)"></rect><rect x="1.5" y="11.6" width="13" height=".8" fill="#efe4cc"></rect></svg>
<svg class="a" style="left:19px;top:173px" width="16" height="16" viewBox="0 0 16 16"><rect x="0" y="0" width="16" height="16" fill="#fff"></rect><rect x="1.5" y="2" width="13" height="6" fill="url(#gSky)"></rect><path d="M3 7.6 L4.6 4.4 L6.2 7.6Z M8 8.4 L9.7 5.6 L11.4 8.4Z" fill="#3fa544"></path><path d="M1.5 8 Q4 5.6 7 7.6 Q9.6 9 12 7.2 Q13.4 6.2 14.5 6.6 V12 H1.5Z" fill="url(#gSand)"></path><rect x="1.5" y="11.6" width="13" height="3.4" fill="url(#gBeige)"></rect><rect x="1.5" y="11.6" width="13" height=".8" fill="#efe4cc"></rect></svg>
<svg class="a" style="left:19px;top:194px" width="16" height="16" viewBox="0 0 16 16"><rect x="0" y="0" width="16" height="16" fill="#fff"></rect><rect x="1.5" y="2" width="13" height="6" fill="url(#gSky)"></rect><path d="M3 7.6 L4.6 4.4 L6.2 7.6Z M8 8.4 L9.7 5.6 L11.4 8.4Z" fill="#3fa544"></path><path d="M1.5 8 Q4 5.6 7 7.6 Q9.6 9 12 7.2 Q13.4 6.2 14.5 6.6 V12 H1.5Z" fill="url(#gSand)"></path><rect x="1.5" y="11.6" width="13" height="3.4" fill="url(#gBeige)"></rect><rect x="1.5" y="11.6" width="13" height=".8" fill="#efe4cc"></rect></svg>
</div>

</body></html>
